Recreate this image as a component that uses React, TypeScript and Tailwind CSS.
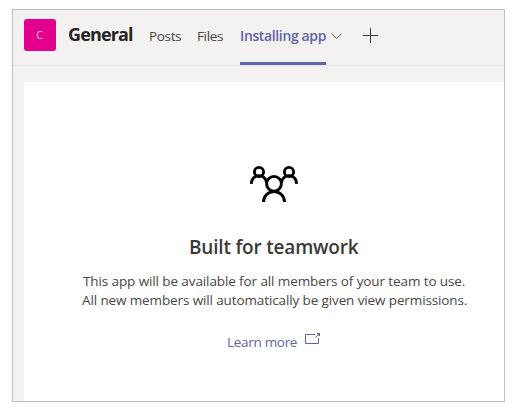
import type { ReactNode } from "react";

function Tab({ children, className = "" }: { children: ReactNode; className?: string }) {
  return (
    <span className={`mt-4 shrink-0 whitespace-nowrap text-[13.5px] leading-5 tracking-[-0.35px] text-[#484644] ${className}`}>
      {children}
    </span>
  );
}

function TeamIcon() {
  return (
    <svg width="50" height="38" viewBox="0 0 50 38" fill="none" stroke="#000" strokeWidth="2.9">
      <circle cx="10" cy="7" r="4.6" />
      <circle cx="40" cy="7" r="4.6" />
      <circle cx="25" cy="18.8" r="7.4" />
      <path d="M2.500 18.800A7.500 7.500 0 0 1 17.500 17.500" />
      <path d="M47.500 18.800A7.500 7.500 0 0 0 32.500 17.500" />
      <path d="M14.500 37A10.500 10.500 0 0 1 35.500 37" />
    </svg>
  );
}

export default function App() {
  return (
    <div className="h-[417px] w-[521px] bg-white pl-3 pt-[9px] font-['Open_Sans','Noto_Sans',sans-serif]">
      <div className="flex h-[393px] w-[493px] flex-col border border-[#bfbfbf] bg-[#f3f2f1]">
        <header className="flex h-14 shrink-0 items-start border-b border-[#e5e4e3] pl-[11px]">
          <div className="mt-[9px] flex size-8 shrink-0 items-center justify-center rounded-[3px] bg-[#e3008c] pr-px pt-0.5 text-[10.5px] text-[#fbd0e9]">
            C
          </div>
          <h1 className="ml-3 mt-3 w-[81px] shrink-0 whitespace-nowrap text-[18px] font-bold leading-6 tracking-[-0.85px] text-[#252423]">
            General
          </h1>
          <Tab className="w-12">Posts</Tab>
          <Tab className="w-[43px]">Files</Tab>
          <div className="h-[55px] w-[86px] shrink-0 border-b-[3px] border-[#6264a7] pt-4">
            <span className="block whitespace-nowrap text-[14px] font-semibold leading-5 tracking-[-0.37px] text-[#6264a7]">
              Installing app
            </span>
          </div>
          <svg className="ml-[5px] mt-[23px] shrink-0" width="11" height="7" fill="none" stroke="#605e5c">
            <path d="M.5.700 5.500 5.500 10.500.700" />
          </svg>
          <svg className="ml-[21px] mt-[18px] shrink-0" width="15" height="15" fill="none" stroke="#3b3a39">
            <path d="M7.500 0V15M0 7.500H15" />
          </svg>
        </header>
        <main className="ml-[11px] mt-4 flex flex-1 flex-col whitespace-nowrap bg-white pt-[83px] text-[#3b3a39]">
          <div className="pl-[225px]">
            <TeamIcon />
          </div>
          <h2 className="mt-[30px] pl-[165px] text-[19px] font-semibold leading-7 tracking-[-0.2px]">
            Built for teamwork
          </h2>
          <div className="mt-[11px] text-[13.5px] leading-[19px] tracking-[-0.105px] text-[#484644]">
            <p className="pl-[59px]">This app will be available for all members of your team to use.</p>
            <p className="pl-[58px] tracking-[-0.12px]">
              All new members will automatically be given view permissions.
            </p>
          </div>
          <a className="mt-[22px] flex items-start pl-[203px] text-[13.5px] leading-5 tracking-[-0.3px] text-[#6264a7]">
            <span className="w-[78px] shrink-0">Learn more</span>
            <svg width="16" height="13" fill="none" stroke="currentColor">
              <path d="M10 2.500H.5V11.500H13.500V6M10.500 5.500 15 1M12 1.500H14.500V4" />
            </svg>
          </a>
        </main>
      </div>
    </div>
  );
}
